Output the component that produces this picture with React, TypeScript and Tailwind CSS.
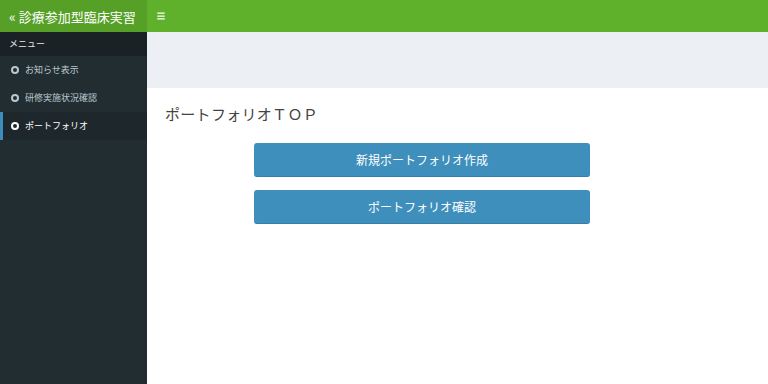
import { Menu } from "lucide-react";

const FONT = { fontFamily: '"Noto Sans CJK JP", "Noto Sans", sans-serif' };

const ITEMS = [
  { label: "お知らせ表示", active: false },
  { label: "研修実施状況確認", active: false },
  { label: "ポートフォリオ", active: true },
];

export default function App() {
  return (
    <div className="w-[768px] h-[384px] flex flex-col overflow-hidden" style={FONT}>
      {/* Header */}
      <div className="h-[32px] flex shrink-0">
        <div className="w-[147px] bg-[#56a027] text-white text-[13px] flex items-center pl-[9px] gap-[3px] leading-none">
          <span className="text-[14px]">«</span>
          <span>診療参加型臨床実習</span>
        </div>
        <div className="flex-1 bg-[#5fb12c] flex items-center pl-[9px]">
          <Menu className="w-[10px] h-[10px] text-white" strokeWidth={3} />
        </div>
      </div>

      <div className="flex flex-1">
        {/* Sidebar */}
        <div className="w-[147px] bg-[#222d32] flex flex-col shrink-0">
          <div className="h-[24px] bg-[#1a2226] text-[#e6e9ea] text-[9px] flex items-center pl-[9px]">
            メニュー
          </div>
          {ITEMS.map((it) => (
            <div
              key={it.label}
              className={
                it.active
                  ? "h-[28px] flex items-center gap-[6px] pl-[8px] bg-[#1e282c] border-l-[3px] border-[#3c8dbc] text-white text-[9px]"
                  : "h-[28px] flex items-center gap-[6px] pl-[8px] border-l-[3px] border-transparent text-[#b8c7ce] text-[9px]"
              }
            >
              <span
                className={
                  it.active
                    ? "w-[8px] h-[8px] rounded-full border-2 border-white"
                    : "w-[8px] h-[8px] rounded-full border-2 border-[#b8c7ce]"
                }
              />
              <span>{it.label}</span>
            </div>
          ))}
        </div>

        {/* Content */}
        <div className="flex-1 flex flex-col bg-white">
          <div className="h-[56px] bg-[#ecf0f5]" />
          <div className="pl-[18px] pt-[18px] text-[15px] text-[#444] leading-none tracking-[0.3px]">
            ポートフォリオＴＯＰ
          </div>
          <div className="flex flex-col items-start pl-[107px] pt-[22px] gap-[13px]">
            <button className="w-[336px] h-[34px] bg-[#3f8fbd] rounded-[3px] border-b border-[#367fa9] text-white text-[12px]">
              新規ポートフォリオ作成
            </button>
            <button className="w-[336px] h-[34px] bg-[#3f8fbd] rounded-[3px] border-b border-[#367fa9] text-white text-[12px]">
              ポートフォリオ確認
            </button>
          </div>
        </div>
      </div>
    </div>
  );
}
